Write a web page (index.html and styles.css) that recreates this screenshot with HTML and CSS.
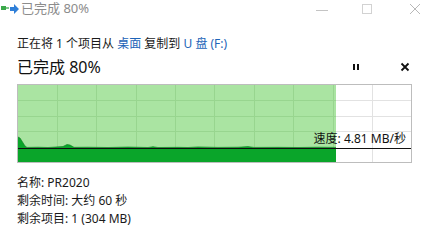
FILE: index.html
```html
<!DOCTYPE html>
<html lang="zh-CN">
<head>
<meta charset="utf-8">
<link rel="stylesheet" href="styles.css">
</head>
<body>
<div class="window">
  <div class="titlebar">
    <svg class="app-icon" width="18" height="12" viewBox="0 0 18 12">
      <rect x="0" y="3" width="5" height="4" fill="#3aa84a"/>
      <rect x="5" y="4" width="3" height="2" fill="#7fc88a"/>
      <path d="M9 4 h4 v-3 l5 5 l-5 5 v-3 h-4 z" fill="#2f7fd8"/>
    </svg>
    <span class="title">已完成 80%</span>
    <div class="controls">
      <svg width="12" height="12" viewBox="0 0 12 12" class="ctl min"><path d="M0 7.5h12" stroke="#c4c4c4" stroke-width="1"/></svg>
      <svg width="12" height="12" viewBox="0 0 12 12" class="ctl max"><rect x="1.5" y="1.5" width="9" height="9" fill="none" stroke="#d2d2d2" stroke-width="1"/></svg>
      <svg width="12" height="12" viewBox="0 0 12 12" class="ctl close"><path d="M1 1L11 11M11 1L1 11" stroke="#b8b8b8" stroke-width="1"/></svg>
    </div>
  </div>
  <div class="content">
    <div class="status">正在将 1 个项目从 <span class="link">桌面</span> 复制到 <span class="link">U 盘 (F:)</span></div>
    <div class="headline">
      <span class="pct">已完成 80%</span>
      <div class="actions">
        <svg width="8" height="8" viewBox="0 0 8 8" class="pause"><rect x="1" y="1" width="2" height="6" fill="#111"/><rect x="5" y="1" width="2" height="6" fill="#111"/></svg>
        <svg width="10" height="10" viewBox="0 0 10 10" class="x"><path d="M1.5 1.5L8.5 8.5M8.5 1.5L1.5 8.5" stroke="#111" stroke-width="1.8"/></svg>
      </div>
    </div>
    <div class="chart">
      <svg width="393" height="77" viewBox="0 0 393 77" class="graph">
        <rect x="0" y="0" width="318" height="77" fill="#aae4a2"/>
        <g stroke="#e2e2e2" stroke-width="1">
          <path d="M318 15.5H393M318 31.5H393M318 46.5H393M354.5 0V77"/>
        </g>
        <g stroke="#98d58f" stroke-width="1">
          <path d="M0 15.5H318M0 31.5H318M0 46.5H318M39.5 0V77M78.5 0V77M118.5 0V77M157.5 0V77M196.5 0V77M236.5 0V77M275.5 0V77M315.5 0V77"/>
        </g>
        <path d="M0 77 V52 L2 53 L7 61 L9 62.4 L20 62.2 L30 62.5 L45 61.5 L49 59.5 L52 60 L56 62.3 L70 62.2 L90 62.5 L110 62 L130 62.5 L135 61.7 L140 62.5 L160 62.3 L170 62.5 L180 61.9 L200 62.4 L220 62.2 L230 61.6 L236 62.4 L260 62.3 L280 62.5 L300 62.2 L318 62.4 V77 Z" fill="#0aa52a"/>
        <path d="M0 52 L2 53 L7 61 L9 62.4 L20 62.2 L30 62.5 L45 61.5 L49 59.5 L52 60 L56 62.3 L70 62.2 L90 62.5 L110 62 L130 62.5 L135 61.7 L140 62.5 L160 62.3 L170 62.5 L180 61.9 L200 62.4 L220 62.2 L230 61.6 L236 62.4 L260 62.3 L280 62.5 L300 62.2 L318 62.4" fill="none" stroke="#0b7a1e" stroke-width="0.6"/>
        <path d="M0 63.5H393" stroke="#111" stroke-width="1"/>
      </svg>
      <span class="speed">速度: 4.81 MB/秒</span>
    </div>
    <div class="details">
      <div>名称: PR2020</div>
      <div>剩余时间: 大约 60 秒</div>
      <div>剩余项目: 1 (304 MB)</div>
    </div>
  </div>
</div>
</body>
</html>
```
FILE: styles.css
```css
* { box-sizing: border-box; }
html, body {
  margin: 0;
  padding: 0;
  background: #fff;
}
body {
  font-family: "Noto Sans", "Noto Sans CJK SC", sans-serif;
  color: #1a1a1a;
  width: 429px;
  height: 238px;
  overflow: hidden;
}
.window { width: 429px; }
.titlebar {
  height: 17px;
  display: flex;
  align-items: center;
}
.app-icon { margin-left: 1px; margin-right: 2px; }
.title {
  font-size: 13px;
  color: #8c8c8c;
  line-height: 17px;
}
.controls {
  margin-left: auto;
  display: flex;
  align-items: center;
  padding-right: 8px;
}
.ctl.min { margin-right: 33px; }
.ctl.max { margin-right: 36px; }
.content { padding: 0 18px 0 17px; }
.status {
  margin-top: 19px;
  font-size: 12px;
  line-height: 16px;
  color: #1a1a1a;
}
.link { color: #1d64b8; }
.headline {
  display: flex;
  align-items: center;
  margin-top: 5px;
  height: 20px;
}
.pct {
  font-size: 16px;
  line-height: 20px;
  color: #111;
}
.actions {
  margin-left: auto;
  display: flex;
  align-items: center;
  gap: 40px;
  padding-right: 1px;
}
.chart {
  position: relative;
  margin-top: 7px;
  width: 395px;
  height: 79px;
  border: 1px solid #bdbdbd;
}
.graph { display: block; }
.speed {
  position: absolute;
  right: 5px;
  top: 47px;
  font-size: 12px;
  line-height: 14px;
  color: #111;
}
.details {
  margin-top: 11px;
  font-size: 12px;
  line-height: 18px;
  color: #1a1a1a;
}
```
